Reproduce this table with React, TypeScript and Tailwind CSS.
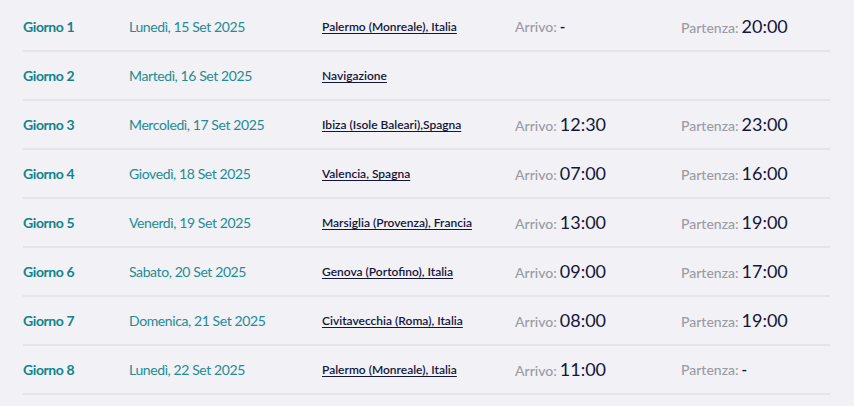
const days = [
  { day: "Giorno 1", date: "Lunedì, 15 Set 2025", port: "Palermo (Monreale), Italia", arr: "-", dep: "20:00" },
  { day: "Giorno 2", date: "Martedì, 16 Set 2025", port: "Navigazione", arr: null, dep: null },
  { day: "Giorno 3", date: "Mercoledì, 17 Set 2025", port: "Ibiza (Isole Baleari),Spagna", arr: "12:30", dep: "23:00" },
  { day: "Giorno 4", date: "Giovedì, 18 Set 2025", port: "Valencia, Spagna", arr: "07:00", dep: "16:00" },
  { day: "Giorno 5", date: "Venerdì, 19 Set 2025", port: "Marsiglia (Provenza), Francia", arr: "13:00", dep: "19:00" },
  { day: "Giorno 6", date: "Sabato, 20 Set 2025", port: "Genova (Portofino), Italia", arr: "09:00", dep: "17:00" },
  { day: "Giorno 7", date: "Domenica, 21 Set 2025", port: "Civitavecchia (Roma), Italia", arr: "08:00", dep: "19:00" },
  { day: "Giorno 8", date: "Lunedì, 22 Set 2025", port: "Palermo (Monreale), Italia", arr: "11:00", dep: "-" },
];

function Time({ label, value }: { label: string; value: string | null }) {
  if (value === null) return <div />;
  return (
    <div className="flex items-baseline gap-[3px]">
      <span className="text-[14px] font-medium text-[#9b9ba3]">{label}:</span>
      <span className={value === "-" ? "text-[15px] font-semibold text-[#14163a]" : "text-[18px] font-normal text-[#14163a]"}>
        {value}
      </span>
    </div>
  );
}

export default function App() {
  return (
    <div
      className="min-h-screen w-full bg-[#f1f1f6] pt-[3px]"
      style={{ fontFamily: "Lato, 'Noto Sans', sans-serif" }}
    >
      <div className="ml-[23px] w-[807px]">
        {days.map((d) => (
          <div
            key={d.day}
            className="grid h-[49px] grid-cols-[106px_193px_193px_166px_1fr] items-center border-b-2 border-[#e4e4ea]"
          >
            <div className="text-[14px] font-bold tracking-[-0.4px] text-[#12838a]">{d.day}</div>
            <div className="text-[14px] tracking-[-0.4px] text-[#238c93]">{d.date}</div>
            <div className="-mt-[3px]">
              <a href="#" className="text-[12px] font-semibold text-[#14163a] underline underline-offset-[2px]">
                {d.port}
              </a>
            </div>
            <Time label="Arrivo" value={d.arr} />
            <Time label="Partenza" value={d.dep} />
          </div>
        ))}
      </div>
    </div>
  );
}
